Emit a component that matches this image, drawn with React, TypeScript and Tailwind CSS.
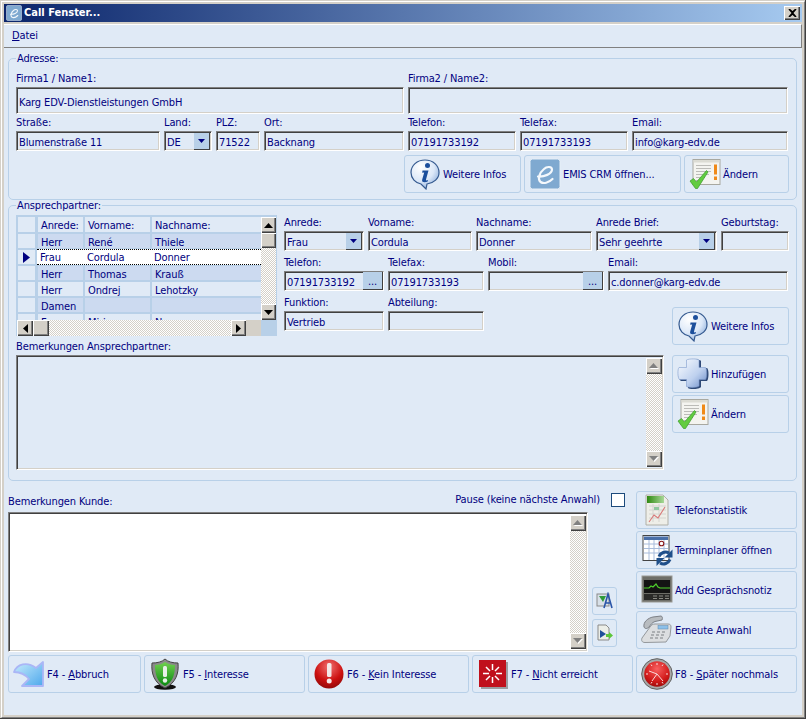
import React from "react";

const sunken =
  "border border-t-[#808080] border-l-[#808080] border-r-white border-b-white shadow-[inset_1px_1px_0_#404040,inset_-1px_-1px_0_#d4d0c8]";
const raised = "bg-[#d4d0c8] shadow-[inset_1px_1px_0_#fff,inset_-1px_-1px_0_#404040,inset_-2px_-2px_0_#808080]";
const checker = "bg-[repeating-conic-gradient(#d4d0c8_0_25%,#fff_0_50%)] bg-[length:2px_2px]";

function Field({ label, value, className, h = "h-[20px]", combo, dots }: { label: string; value?: string; className: string; h?: string; combo?: boolean; dots?: boolean }) {
  return (
    <div className={className}>
      <div className="h-[14px] mb-[2px] leading-[15px] whitespace-nowrap">{label}</div>
      <div className={`${h} ${sunken} flex items-center pl-[2px] overflow-hidden`}>
        <span className="flex-1 whitespace-nowrap overflow-hidden pt-[4px] leading-[14px]">{value}</span>
        {combo && (
          <span className="w-[16px] h-[17px] mr-px mt-px bg-[#b8d0e8] border-r border-b border-[#404040] flex items-center justify-center">
            <svg width="8" height="4"><path d="M0 0h7L3.500 4z" fill="#000080" /></svg>
          </span>
        )}
        {dots && (
          <span className="w-[20px] h-[18px] bg-[#b8d0e8] border-r border-b border-[#404040] flex items-end justify-center leading-[14px] text-[#000080]">...</span>
        )}
      </div>
    </div>
  );
}

function Btn({ icon, children, className }: { icon: React.ReactNode; children: React.ReactNode; className: string }) {
  return (
    <div className={`h-[38px] shrink-0 rounded-[3px] border border-[#b8d0e8] flex items-center pl-[4px] whitespace-nowrap ${className}`}>
      <span className="w-[32px] h-[32px] mr-[2px] shrink-0">{icon}</span>
      <span className="pt-[2px]">{children}</span>
    </div>
  );
}

const S = ({ children }: { children: React.ReactNode }) => (
  <svg width="32" height="32" viewBox="0 0 32 32">{children}</svg>
);

const InfoIcon = () => (
  <S>
    <defs>
      <radialGradient id="ig" cx="35%" cy="25%" r="80%"><stop offset="0" stopColor="#fff" /><stop offset="0.6" stopColor="#dce8f8" /><stop offset="1" stopColor="#8fb0dc" /></radialGradient>
    </defs>
    <path d="M16 2C8 2 2 7.500 2 14.500c0 6 4.500 10.500 10 11.500l5 5 1-5c7-1 12-5.500 12-11.500C30 7.500 24 2 16 2z" fill="url(#ig)" stroke="#34598f" strokeWidth="1.200" />
    <circle cx="18.500" cy="7.500" r="2.500" fill="#1c4f9c" />
    <path d="M13.500 12.500h6l-2.500 9c-.2 1 .5 1.200 2 .5l-.3 1.500c-2 1-6.500 1.500-5.500-2l2-7-2 .3z" fill="#1c4f9c" />
  </S>
);
const CheckDoc = () => (
  <S>
    <rect x="4" y="1.500" width="27" height="25" fill="#f4f4f0" stroke="#a8a8a0" />
    <rect x="4.500" y="2" width="26" height="2.500" fill="#dcdcd4" />
    <path d="M7 7.500h15M7 10.500h15M7 13.500h15M7 16.500h13M7 19.500h9M7 22.500h6" stroke="#bcbcb8" />
    <rect x="25" y="6.500" width="3" height="10" fill="#f08a18" />
    <rect x="25" y="18.500" width="3" height="3.500" fill="#f08a18" />
    <path d="M1 23l3.500-2.500 3 3.500 10-11.500 1.500 1.500L8.500 30.500h-2z" fill="#62cc40" stroke="#3a9a2a" strokeWidth=".7" />
  </S>
);
const EIcon = ({ s = 32 }: { s?: number }) => (
  <svg width={s} height={s} viewBox="0 0 32 32">
    <rect x="1" y="1" width="30" height="30" rx="2.500" fill="#7fa9d0" stroke="#e6eff8" />
    <path d="M9 18.500c6 .5 14-2.500 14-7 0-3-5-3.500-8-.5-5 4-6.500 10.500-3.500 13 3 2 8 1 12-3" fill="none" stroke="#f4f8fc" strokeWidth="2.200" strokeLinecap="round" />
  </svg>
);
const PlusIcon = () => (
  <S>
    <defs>
      <linearGradient id="pg" x1="0" y1="0" x2="1" y2="1"><stop offset="0" stopColor="#fbfdff" /><stop offset="0.6" stopColor="#bdd0ee" /><stop offset="1" stopColor="#6a8cc8" /></linearGradient>
    </defs>
    <path d="M11 3c3-2 12-2 13 0v7h6c2 1 2 11 0 13h-6v6c-1 2-11 3-13 1v-7H4C1 21 1 12 3 11h8z" fill="#2f4a78" />
    <path d="M9.500 2C12 .5 21 .5 22 2v7.500h6.500c1.500 1 1.500 10.500 0 12H22V28c-1 1.500-10 2-12.500.5V21.500h-7C.500 20 .500 11 2 9.500h7.500z" fill="url(#pg)" stroke="#7f9ccc" strokeWidth=".6" />
  </S>
);
const StatIcon = () => (
  <S>
    <defs>
      <linearGradient id="stg" x1="0" y1="0" x2="1" y2="0"><stop offset="0" stopColor="#2f8a12" /><stop offset="1" stopColor="#a8d898" /></linearGradient>
    </defs>
    <path d="M5 1h17l5 5v25H5z" fill="#eeeee8" stroke="#b0b0a8" />
    <rect x="6" y="2" width="17" height="7" fill="url(#stg)" />
    <path d="M8 12h17M8 16h17M8 20h17M8 24h17M12 10v18M18 10v18" stroke="#d4d4d0" />
    <rect x="13" y="13" width="5" height="3" fill="#90c8a0" />
    <path d="M8 28l5-7 4 3 7-11" fill="none" stroke="#d87878" strokeWidth="1.100" />
  </S>
);
const CalIcon = () => (
  <S>
    <rect x="2" y="1.500" width="26" height="25" fill="#fff" stroke="#444" />
    <rect x="3" y="2.500" width="24" height="3.500" fill="#4a6fa8" />
    <path d="M3 10h24M3 14.500h24M3 19h24M8 6v20M13 6v20M18 6v20M23 6v20" stroke="#a8bcdc" />
    <circle cx="20.500" cy="9.500" r="2.300" fill="#fff" stroke="#8a1818" strokeWidth="1.100" />
    <path d="M18 22.500a7 7 0 0 1 10-3.500" fill="none" stroke="#1f4f8a" strokeWidth="3" />
    <path d="M31.500 15.500v8h-8z" fill="#1f4f8a" />
    <path d="M29 25.500a7 7 0 0 1-10 3.500" fill="none" stroke="#1f4f8a" strokeWidth="3" />
    <path d="M15.500 32v-8h8z" fill="#1f4f8a" />
  </S>
);
const MonIcon = () => (
  <S>
    <rect x="1" y="2" width="30" height="26" fill="#6e6e68" stroke="#9a9a94" />
    <rect x="3" y="6" width="26" height="13" fill="#141414" />
    <path d="M3 14h5l2-2 2 1 3-3 2 3 2 1h10" fill="none" stroke="#4ed02c" strokeWidth="1.200" />
    <rect x="3" y="20" width="26" height="6" fill="#2a2a28" />
    <path d="M12 22h4M18 22h4M24 22h4M12 24.500h4M18 24.500h4M24 24.500h4" stroke="#8a8a84" />
  </S>
);
const PhoneIcon = () => (
  <S>
    <path d="M1 24L9 13c1-2 3-3 5-3h13c2 0 3 1 3 3l-1 9-4 6-21 .5c-3 0-4-2-3-4.500z" fill="#dcdee0" stroke="#94989c" />
    <path d="M3 13C2 8 7 4 12 3l8-1c1 0 2 2 1 4l-7 1.500c-3 1-4 3-6 5.500C6 15 4 15 3 13z" fill="#b8bcc0" stroke="#7c8086" />
    <rect x="17" y="11.500" width="10" height="3.500" fill="#8cc0ea" stroke="#5e88ac" strokeWidth=".5" />
    <path d="M11 18h3M16 18h3M21 18h3M10 21h3M15 21h3M20 21h3M9 24h3M14 24h3M19 24h3" stroke="#7c8084" strokeWidth="1.200" />
  </S>
);
const ClockIcon = () => (
  <S>
    <defs>
      <radialGradient id="cg" cx="50%" cy="30%" r="70%"><stop offset="0" stopColor="#f86060" /><stop offset="0.7" stopColor="#d01818" /><stop offset="1" stopColor="#a00c0c" /></radialGradient>
    </defs>
    <circle cx="16" cy="16" r="15.300" fill="#a8a8a8" stroke="#606060" />
    <circle cx="16" cy="16" r="12.800" fill="url(#cg)" />
    <path d="M16 16L8 13M16 16l6 7M16 16l-5 7" stroke="#f8d8d8" strokeWidth="1" />
    <path d="M16 5v2M16 25v2M5 16h2M25 16h2M10 6.500l1 1.500M22 6.500l-1 1.500M10 25.500l1-1.500M22 25.500l-1-1.500" stroke="#f8e0e0" />
  </S>
);
const ArrowIcon = () => (
  <S>
    <defs>
      <linearGradient id="ag" x1="0" y1="0" x2="1" y2="1"><stop offset="0" stopColor="#c8ecfc" /><stop offset="1" stopColor="#4ea8ec" /></linearGradient>
    </defs>
    <path d="M1 14C4 6 14 3 23 10l7-6v24H9l7-7C12 16 7 14 1 14z" fill="url(#ag)" stroke="#aab6f6" strokeWidth="1.800" strokeLinejoin="round" />
  </S>
);
const ShieldIcon = () => (
  <S>
    <defs>
      <linearGradient id="sg" x1="0" y1="0" x2="0" y2="1"><stop offset="0" stopColor="#70d050" /><stop offset="1" stopColor="#0a8a10" /></linearGradient>
    </defs>
    <ellipse cx="16" cy="29" rx="11" ry="2.800" fill="#111" />
    <path d="M16 1c3 3 8 4 13 4 1 10-2 20-13 25C5 25 2 15 3 5c5 0 10-1 13-4z" fill="#8a8a8a" stroke="#444" />
    <path d="M16 4c3 2 6 3 10 3 0 9-2 17-10 21C8 24 6 16 6 7c4 0 7-1 10-3z" fill="url(#sg)" />
    <rect x="14" y="8" width="4" height="11" rx="1.500" fill="#e8f0e8" />
    <circle cx="16" cy="22.500" r="2.200" fill="#e8f0e8" />
  </S>
);
const AlertIcon = () => (
  <S>
    <defs>
      <radialGradient id="rg" cx="50%" cy="25%" r="80%"><stop offset="0" stopColor="#f07070" /><stop offset="0.6" stopColor="#cc1010" /><stop offset="1" stopColor="#8a0808" /></radialGradient>
    </defs>
    <circle cx="16" cy="16" r="14.500" fill="url(#rg)" />
    <rect x="14" y="5" width="4.500" height="14" rx="1.500" fill="#f4e8e8" />
    <circle cx="16.200" cy="23" r="2.500" fill="#f4e8e8" />
  </S>
);
const BurstIcon = () => (
  <S>
    <rect x="4" y="4" width="27" height="27" fill="#9c9ca0" />
    <rect x="2" y="2" width="27" height="27" fill="#c0101c" />
    <path d="M15.500 6v6M15.500 19v6M6 15.500h6M19 15.500h6M9 9l4 4M22 9l-4 4M9 22l4-4M22 22l-4-4" stroke="#fff" strokeWidth="1.500" />
  </S>
);

const SmallA = () => (
  <svg width="18" height="18" viewBox="0 0 18 18">
    <rect x="1" y="2" width="12" height="12" fill="#d8e0e8" stroke="#8a8a8a" />
    <path d="M3 4l7 0-3 6z" fill="#2f9a3a" />
    <path d="M8 16L12 2l4 14M9.500 11h5" fill="none" stroke="#2a55a8" strokeWidth="1.600" />
  </svg>
);
const SmallB = () => (
  <svg width="18" height="18" viewBox="0 0 18 18">
    <path d="M2 1h8l3 3v12H2z" fill="#eceee8" stroke="#8a8a8a" />
    <path d="M4 6l6 4-6 4z" fill="#1f4f9a" />
    <path d="M10 10h3V8l4 3.500-4 3.500v-2h-3z" fill="#5cc63a" />
  </svg>
);

const Up = () => <svg width="9" height="5"><path d="M4.500 0L9 5H0z" fill="#000" /></svg>;
const Down = () => <svg width="9" height="5"><path d="M0 0h9L4.500 5z" fill="#000" /></svg>;
const UpGrey = () => <svg width="10" height="6"><path d="M5 1L10 6H1z" fill="#fff" /><path d="M4.500 0L9 5H0z" fill="#808080" /></svg>;
const DownGrey = () => <svg width="10" height="6"><path d="M1 1h9L5.500 6z" fill="#fff" /><path d="M0 0h9L4.500 5z" fill="#808080" /></svg>;

function VBar({ className }: { className: string }) {
  return (
    <div className={`w-[16px] flex flex-col justify-between ${checker} ${className}`}>
      <div className={`h-[16px] ${raised} flex items-center justify-center`}><UpGrey /></div>
      <div className={`h-[16px] ${raised} flex items-center justify-center`}><DownGrey /></div>
    </div>
  );
}

const rows = [
  ["Herr", "René", "Thiele", "t"],
  ["Frau", "Cordula", "Donner", "s"],
  ["Herr", "Thomas", "Krauß", "t"],
  ["Herr", "Ondrej", "Lehotzky", "l"],
  ["Damen", "", "", "t"],
  ["Frau", "Miriam", "Neumann", "l"],
];

function Grid() {
  return (
    <div className="w-[261px] h-[121px] bg-[#b8d0e8] flex flex-col shrink-0">
      <div className="h-[105px] flex">
        <div className="w-[245px] overflow-hidden pt-[2px] pl-[2px]">
          <div className="flex h-[15px] mb-[2px] leading-[17px]">
            <div className="w-[17px] mr-[3px] bg-[#e0eaf6]" />
            <div className="w-[45px] mr-[2px] pl-[3px] bg-[#e0eaf6]">Anrede:</div>
            <div className="w-[65px] mr-[2px] pl-[3px] bg-[#e0eaf6]">Vorname:</div>
            <div className="flex-1 pl-[3px] bg-[#e0eaf6]">Nachname:</div>
          </div>
          {rows.map(([a, b, c, k], i) => (
            <div key={i} className="flex h-[14px] mb-[2px] leading-[18px]">
              <div className="w-[17px] mr-[3px] bg-[#e0eaf6] flex items-center justify-center">
                {k === "s" && <svg width="7" height="11"><path d="M0 0l7 5.500L0 11z" fill="#000080" /></svg>}
              </div>
              {k === "s" ? (
                <div className="flex-1 flex -ml-px bg-white border-y border-dotted border-black h-[16px] -mt-px leading-[16px]">
                  <div className="w-[47px] pl-[3px]">{a}</div>
                  <div className="w-[67px] pl-[3px]">{b}</div>
                  <div className="flex-1 pl-[3px]">{c}</div>
                </div>
              ) : (
                <>
                  <div className={`w-[45px] mr-[2px] pl-[3px] ${k === "t" ? "bg-[#ccdaf0]" : "bg-[#e0eaf6]"}`}>{a}</div>
                  <div className={`w-[65px] mr-[2px] pl-[3px] ${k === "t" ? "bg-[#ccdaf0]" : "bg-[#e0eaf6]"}`}>{b}</div>
                  <div className={`flex-1 pl-[3px] ${k === "t" ? "bg-[#ccdaf0]" : "bg-[#e0eaf6]"}`}>{c}</div>
                </>
              )}
            </div>
          ))}
        </div>
        <div className={`w-[15px] mt-[2px] flex flex-col ${checker}`}>
          <div className={`h-[16px] ${raised} flex items-center justify-center`}><Up /></div>
          <div className={`h-[15px] ${raised}`} />
          <div className={`h-[16px] mt-auto ${raised} flex items-center justify-center`}><Down /></div>
        </div>
      </div>
      <div className="h-[16px] flex pl-px">
        <div className={`w-[229px] flex ${checker}`}>
          <div className={`w-[16px] ${raised} flex items-center justify-center`}>
            <svg width="5" height="9"><path d="M5 0v9L0 4.500z" fill="#000" /></svg>
          </div>
          <div className={`w-[16px] ${raised}`} />
          <div className={`w-[15px] ml-auto ${raised} flex items-center justify-center`}>
            <svg width="5" height="9"><path d="M0 0v9l5-4.500z" fill="#000" /></svg>
          </div>
        </div>
        <div className="w-[15px] bg-[#d4d0c8]" />
      </div>
    </div>
  );
}

export default function App() {
  return (
    <div className="w-[806px] h-[719px] overflow-hidden bg-[#d4d0c8] border-r border-b border-[#404040] font-['DejaVu_Sans_Condensed','DejaVu_Sans',sans-serif] text-[11px] tracking-[-0.12px] text-[#000080] flex flex-col">
      <div className="flex-1 flex flex-col ml-px mt-px border-t border-l border-white border-r border-b border-r-[#808080] border-b-[#808080] p-[2px] min-h-0">
        {/* Title bar */}
        <div className="h-[18px] shrink-0 bg-[linear-gradient(90deg,#0a246a,#a6caf0)] flex items-center pl-[2px] pr-[2px]">
          <EIcon s={16} />
          <span className="ml-[2px] text-white font-bold text-[11px] tracking-normal">Call Fenster...</span>
          <div className={`ml-auto w-[16px] h-[14px] ${raised} flex items-center justify-center`}>
            <svg width="9" height="8"><path d="M1 0l3.500 3L8 0M1 8l3.500-3L8 8M1 0l7 8M8 0L1 8" fill="none" stroke="#000" strokeWidth="1.500" /></svg>
          </div>
        </div>
        {/* Client area */}
        <div className="flex-1 bg-[#e0eaf6] mt-[2px] min-h-0">
          <div className="h-[24px] border-t border-white border-b border-b-[#808080] border-r border-r-[#808080] flex items-center pl-[8px]">
            <span className="pt-px"><u>D</u>atei</span>
          </div>
          <fieldset className="ml-[4px] mt-[4px] w-[789px] h-[148px] border border-[#b8d0e8] rounded-[5px] pl-[7px]">
            <legend className="px-[1px] h-[12px] leading-[13px] whitespace-nowrap">Adresse:</legend>
            <div className="flex gap-[4px] mt-[7px]">
              <Field label="Firma1 / Name1:" value="Karg EDV-Dienstleistungen GmbH" className="w-[388px]" h="h-[27px]" />
              <Field label="Firma2 / Name2:" className="w-[380px]" h="h-[27px]" />
            </div>
            <div className="flex gap-[4px] mt-[1px]">
              <Field label="Straße:" value="Blumenstraße 11" className="w-[144px]" />
              <Field label="Land:" value="DE" className="w-[48px]" combo />
              <Field label="PLZ:" value="71522" className="w-[44px]" />
              <Field label="Ort:" value="Backnang" className="w-[140px]" />
              <Field label="Telefon:" value="07191733192" className="w-[108px]" />
              <Field label="Telefax:" value="07191733193" className="w-[108px]" />
              <Field label="Email:" value="info@karg-edv.de" className="w-[156px]" />
            </div>
            <div className="flex gap-[3px] mt-[4px] ml-[388px]">
              <Btn icon={<InfoIcon />} className="w-[117px]">Weitere Infos</Btn>
              <Btn icon={<EIcon />} className="w-[157px]">EMIS CRM öffnen...</Btn>
              <Btn icon={<CheckDoc />} className="w-[105px]">Ändern</Btn>
            </div>
          </fieldset>
          <fieldset className="ml-[4px] -mt-px w-[789px] h-[282px] border border-[#b8d0e8] rounded-[5px] pl-[7px]">
            <legend className="px-[1px] h-[12px] leading-[14px] whitespace-nowrap">Ansprechpartner:</legend>
            <div className="flex gap-[7px] h-[124px] mt-[4px]">
              <Grid />
              <div className="w-[505px]">
                <div className="flex gap-[4px]">
                  <Field label="Anrede:" value="Frau" className="w-[80px]" combo />
                  <Field label="Vorname:" value="Cordula" className="w-[104px]" />
                  <Field label="Nachname:" value="Donner" className="w-[116px]" />
                  <Field label="Anrede Brief:" value="Sehr geehrte" className="w-[121px]" combo />
                  <Field label="Geburtstag:" className="w-[68px]" />
                </div>
                <div className="flex gap-[4px] mt-[4px]">
                  <Field label="Telefon:" value="07191733192" className="w-[100px]" dots />
                  <Field label="Telefax:" value="07191733193" className="w-[96px]" />
                  <Field label="Mobil:" className="w-[116px]" dots />
                  <Field label="Email:" value="c.donner@karg-edv.de" className="w-[180px]" />
                </div>
                <div className="flex gap-[4px] mt-[4px] items-start">
                  <Field label="Funktion:" value="Vertrieb" className="w-[100px]" />
                  <Field label="Abteilung:" className="w-[96px]" />
                  <Btn icon={<InfoIcon />} className="w-[117px] ml-auto mt-[12px]">Weitere Infos</Btn>
                </div>
              </div>
            </div>
            <div className="flex gap-[8px]">
              <div className="w-[648px]">
                <div className="h-[14px] mb-[2px] leading-[15px]">Bemerkungen Ansprechpartner:</div>
                <div className={`h-[115px] ${sunken} flex justify-end pr-px py-[2px]`}>
                  <VBar className="h-full" />
                </div>
              </div>
              <div className="pt-[16px] flex flex-col gap-[2px]">
                <Btn icon={<PlusIcon />} className="w-[117px]">Hinzufügen</Btn>
                <Btn icon={<CheckDoc />} className="w-[117px]">Ändern</Btn>
              </div>
            </div>
          </fieldset>
          <div className="flex ml-[4px] gap-[8px]">
            <div className="w-[620px] h-[171px] pt-[10px] flex flex-col">
              <div className="h-[21px] flex">
                <span className="mt-[4px] leading-[14px]">Bemerkungen Kunde:</span>
                <span className="ml-auto leading-[14px] mt-[2px]">Pause (keine nächste Anwahl)</span>
                <span className="ml-[11px] mr-[3px] mt-[2px] w-[14px] h-[14px] bg-white border border-[#1c4a7c]" />
              </div>
              <div className="flex gap-[4px] flex-1">
                <div className={`w-[580px] bg-white ${sunken} flex justify-end pr-px py-[2px]`}>
                  <VBar className="h-full" />
                </div>
                <div className="flex flex-col gap-[4px] justify-end pb-[5px]">
                  <div className="w-[25px] h-[28px] rounded-[3px] border border-[#b8d0e8] flex items-center justify-center"><SmallA /></div>
                  <div className="w-[25px] h-[28px] rounded-[3px] border border-[#b8d0e8] flex items-center justify-center"><SmallB /></div>
                </div>
              </div>
            </div>
            <div className="pt-[10px] flex flex-col gap-[2px]">
              <Btn icon={<StatIcon />} className="w-[161px]">Telefonstatistik</Btn>
              <Btn icon={<CalIcon />} className="w-[161px]">Terminplaner öffnen</Btn>
              <Btn icon={<MonIcon />} className="w-[161px]">Add Gesprächsnotiz</Btn>
              <Btn icon={<PhoneIcon />} className="w-[161px]">Erneute Anwahl</Btn>
            </div>
          </div>
          <div className="flex ml-[4px] gap-[3px] mt-[3px]">
            <Btn icon={<ArrowIcon />} className="w-[133px]">F4 - <u>A</u>bbruch</Btn>
            <Btn icon={<ShieldIcon />} className="w-[161px]">F5 - <u>I</u>nteresse</Btn>
            <Btn icon={<AlertIcon />} className="w-[161px]">F6 - <u>K</u>ein Interesse</Btn>
            <Btn icon={<BurstIcon />} className="w-[161px]">F7 - <u>N</u>icht erreicht</Btn>
            <Btn icon={<ClockIcon />} className="w-[161px]">F8 - <u>S</u>päter nochmals</Btn>
          </div>
        </div>
      </div>
    </div>
  );
}
